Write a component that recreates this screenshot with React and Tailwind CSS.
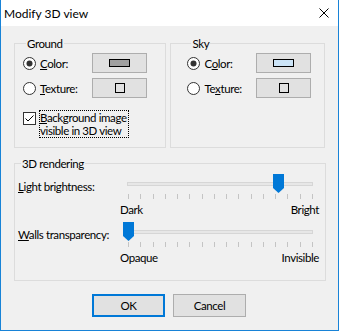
import React from 'react';

const ticks = Array.from({ length: 16 });

function Radio({ checked }) {
  return (
    <svg width="13" height="13" viewBox="0 0 13 13" className="shrink-0">
      <circle cx="6.5" cy="6.5" r="6" fill="#fff" stroke="#333" strokeWidth="1" />
      {checked && <circle cx="6.5" cy="6.5" r="3" fill="#333" />}
    </svg>
  );
}

function Swatch({ children }) {
  return (
    <div className="w-[55px] h-[20px] bg-[#e1e1e1] border border-[#adadad] flex items-center justify-center">
      {children}
    </div>
  );
}

function RadioRow({ checked, label, swatch, className }) {
  return (
    <div className={`flex items-center h-[20px] ${className || ''}`}>
      <div className="w-[69px] flex items-center">
        <Radio checked={checked} />
        <span className="ml-[4px]">{label}</span>
      </div>
      <Swatch>{swatch}</Swatch>
    </div>
  );
}

function Slider({ label, left, min, max }) {
  return (
    <div className="flex items-start">
      <div className="w-[105px] mt-[5px] whitespace-nowrap">{label}</div>
      <div className="w-[196px] flex flex-col">
        <div className="relative h-[19px]">
          <div className="absolute left-[4px] top-[8px] w-[186px] h-[4px] bg-[#e7e7e7] border border-[#d6d6d6]" />
          <svg width="11" height="19" viewBox="0 0 11 19" className="absolute top-0" style={{ left }}>
            <polygon points="0,0 11,0 11,14 5.5,19 0,14" fill="#0078d7" />
          </svg>
        </div>
        <div className="ml-[5px] w-[185px] h-[5px] mt-[1px] flex justify-between">
          {ticks.map((_, i) => (
            <div key={i} className="w-[1px] h-[5px] bg-[#c4c4c4]" />
          ))}
        </div>
        <div className="flex justify-between -ml-[3px] mt-[3px]">
          <span>{min}</span>
          <span>{max}</span>
        </div>
      </div>
    </div>
  );
}

export default function App() {
  return (
    <div className="w-[339px] h-[331px] border-x border-b border-[#1883d7] bg-[#f0f0f0] flex flex-col font-['Lato',sans-serif] text-[11.5px] tracking-[-0.4px] leading-[15px] text-black">
      {/* titlebar */}
      <div className="h-[26px] bg-white flex items-center justify-between pl-[3px] pr-[9px] text-[12px] tracking-normal">
        <span>Modify 3D view</span>
        <svg width="10" height="10" viewBox="0 0 10 10">
          <path d="M0.5 0.5 L9.5 9.5 M9.5 0.5 L0.5 9.5" stroke="#000" strokeWidth="1" />
        </svg>
      </div>

      <div className="flex flex-col px-[13px]">
        <div className="flex gap-[4px] mt-[10px]">
          <fieldset className="w-[153px] h-[112px] border border-[#dcdcdc] pl-[8px]">
            <legend className="ml-[3px] px-[1px]">Ground</legend>
            <RadioRow
              checked
              className="mt-[2px]"
              label={<><u>C</u>olor:</>}
              swatch={<div className="w-[21px] h-[8px] bg-[#a0a0a0] border border-black" />}
            />
            <RadioRow
              className="mt-[5px]"
              label={<><u>T</u>exture:</>}
              swatch={<div className="w-[10px] h-[10px] border border-black" />}
            />
            <div className="flex items-start mt-[12px]">
              <svg width="13" height="13" viewBox="0 0 13 13" className="shrink-0 mt-[2px]">
                <rect x="0.5" y="0.5" width="12" height="12" fill="#fff" stroke="#333" />
                <path d="M2.5 6.5 L5 9 L10.5 3.5" fill="none" stroke="#000" strokeWidth="1" />
              </svg>
              <div className="ml-[3px] border border-dotted border-black leading-[13px] pr-[1px] whitespace-nowrap">
                <u>B</u>ackground image<br />visible in 3D view
              </div>
            </div>
          </fieldset>

          <fieldset className="w-[155px] h-[112px] border border-[#dcdcdc] pl-[16px]">
            <legend className="ml-[4px] px-[1px]">Sky</legend>
            <RadioRow
              checked
              className="mt-[2px]"
              label={<>C<u>o</u>lor:</>}
              swatch={<div className="w-[21px] h-[8px] bg-[#cce4f7] border border-black" />}
            />
            <RadioRow
              className="mt-[5px]"
              label={<>Te<u>x</u>ture:</>}
              swatch={<div className="w-[10px] h-[10px] border border-black" />}
            />
          </fieldset>
        </div>

        <fieldset className="w-[312px] h-[125px] mt-[8px] border border-[#dcdcdc] pl-[3px]">
          <legend className="ml-[3px] px-[1px]">3D rendering</legend>
          <div className="mt-[3px] flex flex-col gap-[5px]">
            <Slider label={<><u>L</u>ight brightness:</>} left={150} min="Dark" max="Bright" />
            <Slider label={<><u>W</u>alls transparency:</>} left={0} min="Opaque" max="Invisible" />
          </div>
        </fieldset>

        <div className="flex gap-[8px] mt-[13px] pl-[78px]">
          <button className="w-[73px] h-[23px] bg-[#e1e1e1] border-2 border-[#0078d7]">OK</button>
          <button className="w-[73px] h-[23px] bg-[#e1e1e1] border border-[#adadad]">Cancel</button>
        </div>
      </div>
    </div>
  );
}
